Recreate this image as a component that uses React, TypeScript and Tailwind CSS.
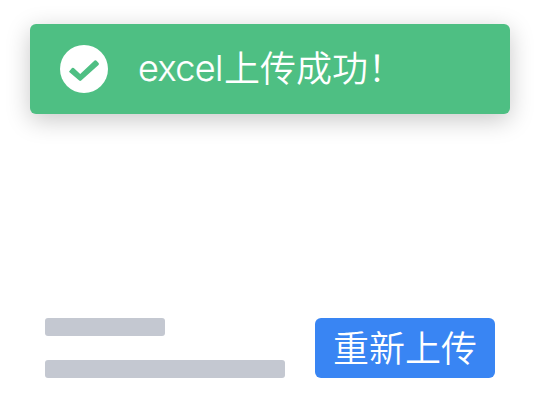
export default function App() {
  return (
    <div className="flex h-[420px] w-[540px] flex-col justify-between overflow-hidden bg-white pt-6 pr-[45px] pb-[42px] pl-[45px] font-['Liberation_Sans','Noto_Sans_CJK_SC',sans-serif]">
      <div className="-mx-[15px] flex h-[90px] shrink-0 items-center rounded-md bg-[#4ebf83] pl-[30px] text-white shadow-[0_6px_24px_rgba(0,0,0,0.22)]">
        <svg className="size-12 shrink-0" viewBox="0 0 48 48">
          <circle cx="24" cy="24" r="24" fill="#fff" />
          <path d="M9.3 26.2 12 23.1Q12.8 22.2 13.8 23.1L20.2 28.9 34.6 15.6Q35.6 14.7 36.5 15.7L38.6 18Q39.4 19 38.5 19.9L21.2 35.6Q20.2 36.5 19.2 35.6L9.5 27.2Q8.8 26.7 9.3 26.2Z" fill="#4ebf83" />
        </svg>
        <div className="ml-[30px] flex h-[54px] items-start text-[36px] leading-[54px] whitespace-nowrap">
          <span className="-mt-px w-[86px] font-['Inter',sans-serif] font-light tracking-[-0.6px] [-webkit-text-stroke:0.2px_white]">excel</span>
          <span className="-mt-[3px] font-['Noto_Sans_CJK_SC',sans-serif] font-[350]">上传成功！</span>
        </div>
      </div>
      <div className="flex h-[60px] shrink-0 justify-between">
        <div className="flex flex-col justify-between">
          <div className="h-[18px] w-[120px] rounded-[3px] bg-[#c4c8d1]" />
          <div className="h-[18px] w-[240px] rounded-[3px] bg-[#c4c8d1]" />
        </div>
        <button className="flex h-[60px] w-[180px] items-center justify-center rounded-md bg-[#3985f3] pb-1 font-['Noto_Sans_CJK_SC',sans-serif] text-[36px] leading-[54px] font-[350] text-white">重新上传</button>
      </div>
    </div>
  );
}
